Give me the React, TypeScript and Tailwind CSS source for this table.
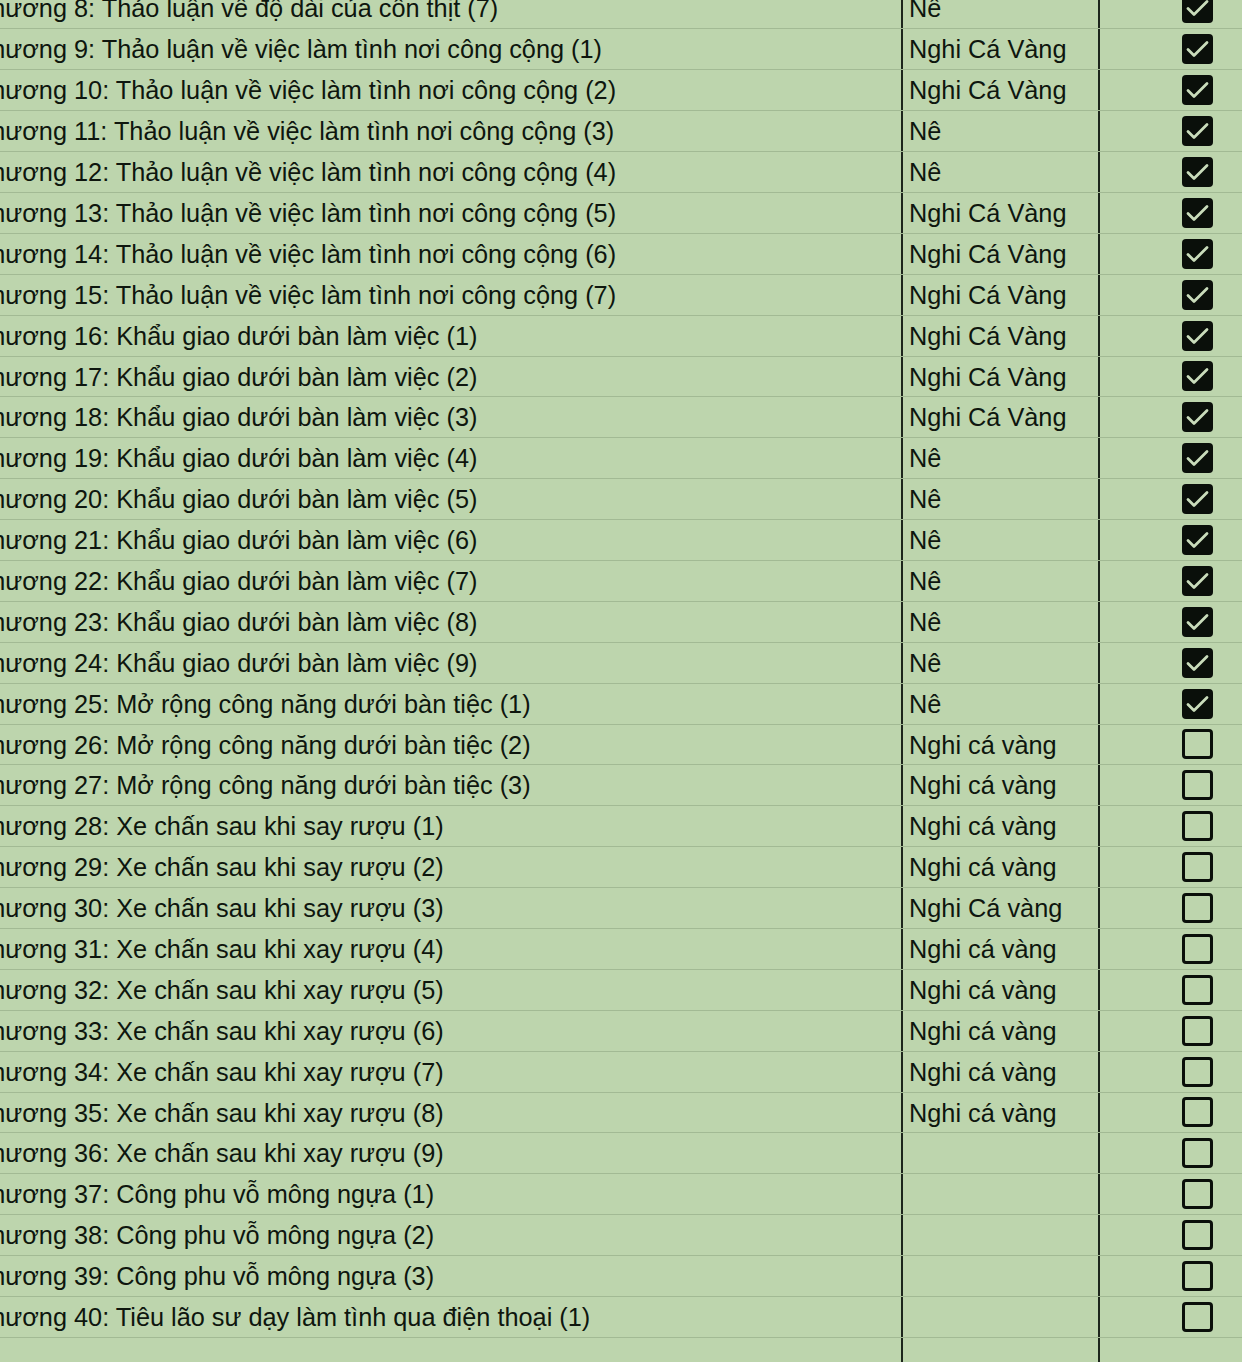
type Row = { n: number; title: string; who: string; done: boolean }

const rows: Row[] = [
  { n: 8, title: 'Thảo luận về độ dài của côn thịt (7)', who: 'Nê', done: true },
  { n: 9, title: 'Thảo luận về việc làm tình nơi công cộng (1)', who: 'Nghi Cá Vàng', done: true },
  { n: 10, title: 'Thảo luận về việc làm tình nơi công cộng (2)', who: 'Nghi Cá Vàng', done: true },
  { n: 11, title: 'Thảo luận về việc làm tình nơi công cộng (3)', who: 'Nê', done: true },
  { n: 12, title: 'Thảo luận về việc làm tình nơi công cộng (4)', who: 'Nê', done: true },
  { n: 13, title: 'Thảo luận về việc làm tình nơi công cộng (5)', who: 'Nghi Cá Vàng', done: true },
  { n: 14, title: 'Thảo luận về việc làm tình nơi công cộng (6)', who: 'Nghi Cá Vàng', done: true },
  { n: 15, title: 'Thảo luận về việc làm tình nơi công cộng (7)', who: 'Nghi Cá Vàng', done: true },
  { n: 16, title: 'Khẩu giao dưới bàn làm việc (1)', who: 'Nghi Cá Vàng', done: true },
  { n: 17, title: 'Khẩu giao dưới bàn làm việc (2)', who: 'Nghi Cá Vàng', done: true },
  { n: 18, title: 'Khẩu giao dưới bàn làm việc (3)', who: 'Nghi Cá Vàng', done: true },
  { n: 19, title: 'Khẩu giao dưới bàn làm việc (4)', who: 'Nê', done: true },
  { n: 20, title: 'Khẩu giao dưới bàn làm việc (5)', who: 'Nê', done: true },
  { n: 21, title: 'Khẩu giao dưới bàn làm việc (6)', who: 'Nê', done: true },
  { n: 22, title: 'Khẩu giao dưới bàn làm việc (7)', who: 'Nê', done: true },
  { n: 23, title: 'Khẩu giao dưới bàn làm việc (8)', who: 'Nê', done: true },
  { n: 24, title: 'Khẩu giao dưới bàn làm việc (9)', who: 'Nê', done: true },
  { n: 25, title: 'Mở rộng công năng dưới bàn tiệc (1)', who: 'Nê', done: true },
  { n: 26, title: 'Mở rộng công năng dưới bàn tiệc (2)', who: 'Nghi cá vàng', done: false },
  { n: 27, title: 'Mở rộng công năng dưới bàn tiệc (3)', who: 'Nghi cá vàng', done: false },
  { n: 28, title: 'Xe chấn sau khi say rượu (1)', who: 'Nghi cá vàng', done: false },
  { n: 29, title: 'Xe chấn sau khi say rượu (2)', who: 'Nghi cá vàng', done: false },
  { n: 30, title: 'Xe chấn sau khi say rượu (3)', who: 'Nghi Cá vàng', done: false },
  { n: 31, title: 'Xe chấn sau khi xay rượu (4)', who: 'Nghi cá vàng', done: false },
  { n: 32, title: 'Xe chấn sau khi xay rượu (5)', who: 'Nghi cá vàng', done: false },
  { n: 33, title: 'Xe chấn sau khi xay rượu (6)', who: 'Nghi cá vàng', done: false },
  { n: 34, title: 'Xe chấn sau khi xay rượu (7)', who: 'Nghi cá vàng', done: false },
  { n: 35, title: 'Xe chấn sau khi xay rượu (8)', who: 'Nghi cá vàng', done: false },
  { n: 36, title: 'Xe chấn sau khi xay rượu (9)', who: '', done: false },
  { n: 37, title: 'Công phu vỗ mông ngựa (1)', who: '', done: false },
  { n: 38, title: 'Công phu vỗ mông ngựa (2)', who: '', done: false },
  { n: 39, title: 'Công phu vỗ mông ngựa (3)', who: '', done: false },
  { n: 40, title: 'Tiêu lão sư dạy làm tình qua điện thoại (1)', who: '', done: false },
]

function Checkbox({ checked }: { checked: boolean }) {
  if (!checked) {
    return <div className="w-[31px] h-[30px] rounded-[4px] border-[3px] border-[#0a0f0a]" />
  }
  return (
    <svg width="31" height="30" viewBox="0 0 31 30">
      <rect x="0" y="0" width="31" height="30" rx="4" fill="#0a0f0a" />
      <polyline
        points="6,15.5 12,21.5 25,8.5"
        fill="none"
        stroke="#c9dcbb"
        strokeWidth="2.8"
        strokeLinecap="round"
        strokeLinejoin="round"
      />
    </svg>
  )
}

function TableRow({ row }: { row?: Row }) {
  return (
    <div className="flex h-[40.9px] border-b border-[#a2ba94]">
      <div className="w-[903px] shrink-0 border-r-2 border-[#1c261c] flex items-center pt-[2px] overflow-hidden">
        {row && (
          <span className="-ml-[27px] whitespace-nowrap">
            Chương {row.n}: {row.title}
          </span>
        )}
      </div>
      <div className="w-[197px] shrink-0 border-r-2 border-[#1c261c] flex items-center pl-[6px] pt-[2px]">
        {row && <span className="whitespace-nowrap">{row.who}</span>}
      </div>
      <div className="flex-1 flex items-center pl-[82px]">
        {row && <Checkbox checked={row.done} />}
      </div>
    </div>
  )
}

export default function App() {
  return (
    <div
      className="w-[1242px] h-[1362px] overflow-hidden bg-[#bdd5ad] text-[#0e160e] text-[25.3px]"
      style={{ fontFamily: '"Liberation Sans", Arial, sans-serif' }}
    >
      <div className="-mt-[11.5px]">
        {rows.map((r) => (
          <TableRow key={r.n} row={r} />
        ))}
        <TableRow />
      </div>
    </div>
  )
}
